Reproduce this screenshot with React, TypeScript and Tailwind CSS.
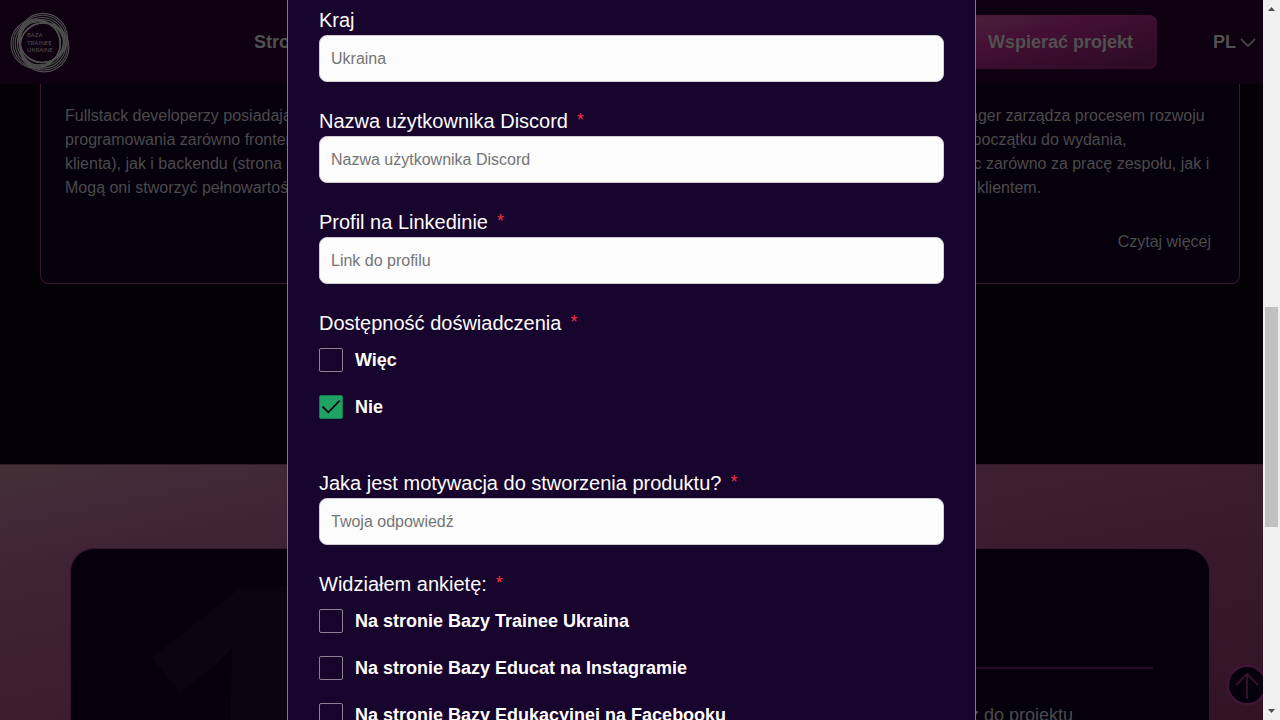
import React from "react";

const RING_ANGLES = [-68, 52, 172];
const RING_SIZES = [
  { r: 24.5, offset: 5.5 },
  { r: 23.6, offset: 4.4 },
  { r: 22.6, offset: 3.2 },
  { r: 21.6, offset: 2 },
];

function Logo() {
  return (
    <svg width="82" height="84" viewBox="0 0 82 84" aria-label="Baza Trainee Ukraine" className="shrink-0">
      <g fill="none" stroke="#4f4f4f" strokeWidth="1.1">
        {RING_ANGLES.flatMap((angle) =>
          RING_SIZES.map(({ r, offset }) => (
            <circle
              key={`${angle}-${r}`}
              cx={41 + offset * Math.cos((angle * Math.PI) / 180)}
              cy={43 + offset * Math.sin((angle * Math.PI) / 180)}
              r={r}
            />
          )),
        )}
      </g>
      <g fill="#4f4f4f" fontSize="6" fontFamily="Lato, sans-serif" fontWeight="500">
        <text x="27" y="37">BAZA</text>
        <text x="27" y="44.5">TRAINEE</text>
        <text x="27" y="52">UKRAINE</text>
      </g>
    </svg>
  );
}

function Header() {
  return (
    <header className="flex h-[84px] shrink-0 items-center bg-[#0e0010] text-lg font-bold text-[#505050]">
      <Logo />
      <nav className="ml-[172px] flex gap-10">
        <a href="#home" className="whitespace-nowrap">Strona główna</a>
      </nav>
      <button
        type="button"
        className="ml-auto h-[54px] rounded-lg bg-linear-to-br from-[#48243c] via-[#440f33] via-35% to-[#290a22] px-6 font-bold whitespace-nowrap shadow-[inset_0_0_4px_#421234]"
      >
        Wspierać projekt
      </button>
      <button type="button" className="mr-[7px] ml-14 flex items-center gap-1 font-bold">
        PL
        <svg width="16" height="16" viewBox="0 0 16 16" fill="none" stroke="#505050" strokeWidth="1.5" aria-hidden="true">
          <path d="M1 5l7 7 7-7" />
        </svg>
      </button>
    </header>
  );
}

function RoleCard({ lines }: { lines: string[] }) {
  return (
    <article className="flex h-[200px] min-w-0 flex-1 flex-col justify-between rounded-b-lg border border-t-0 border-[#3a1535] bg-[#06000d] px-6 pt-5 pb-[29px] leading-6 text-[#4b4b4b]">
      <p className="whitespace-nowrap">
        {lines.map((line) => (
          <span key={line} className="block">{line}</span>
        ))}
      </p>
      <a href="#more" className="mr-1 self-end">Czytaj więcej</a>
    </article>
  );
}

function Page() {
  return (
    <div className="flex h-full flex-col bg-[#030006]">
      <Header />
      <section className="mb-[180px] flex shrink-0 gap-7 pr-[23px] pl-10">
        <RoleCard
          lines={[
            "Fullstack developerzy posiadają umiejętności",
            "programowania zarówno frontendu (strona",
            "klienta), jak i backendu (strona serwera).",
            "Mogą oni stworzyć pełnowartościowy produkt.",
          ]}
        />
        <RoleCard lines={["Designer tworzy wygląd produktu."]} />
        <RoleCard
          lines={[
            "Project manager zarządza procesem rozwoju",
            "produktu od początku do wydania,",
            "odpowiadając zarówno za pracę zespołu, jak i",
            "negocjacje z klientem.",
          ]}
        />
      </section>
      <section className="flex min-h-0 flex-1 flex-col border-t border-[#331a26] bg-linear-to-br from-[#443037] via-[#402435] via-20% to-[#331226] pt-[83px] pr-[53px] pl-[70px]">
        <div className="flex flex-1 justify-between overflow-hidden rounded-t-3xl border border-b-0 border-[#381430] bg-[#06000d] pr-14 pl-[58px]">
          <span className="mt-[-100px] font-['Open_Sans',sans-serif] text-[388px] leading-[530px] font-bold text-[#0c0511]" aria-hidden="true">1</span>
          <div className="mt-[118px] w-[480px] border-t-2 border-[#280a24] pt-8 pr-20 text-right text-lg leading-7 text-[#4b4b4b]">
            Dołączasz do projektu
          </div>
        </div>
      </section>
    </div>
  );
}

function Label({ children, required, htmlFor }: { children: React.ReactNode; required?: boolean; htmlFor?: string }) {
  const content = (
    <>
      {children}
      {required && <span className="ml-1 align-top text-lg leading-7 text-[#f5303e]"> *</span>}
    </>
  );
  const style = "block h-[30px] text-xl leading-[30px] text-[#fcfcfc]";
  return htmlFor ? <label htmlFor={htmlFor} className={style}>{content}</label> : <legend className={style}>{content}</legend>;
}

function Field({ id, label, placeholder, required }: { id: string; label: string; placeholder: string; required?: boolean }) {
  return (
    <div>
      <Label htmlFor={id} required={required}>{label}</Label>
      <input
        id={id}
        type="text"
        placeholder={placeholder}
        className="block h-[47px] w-full rounded-lg border border-[#cfcbd3] bg-[#fcfcfc] px-[11px] text-base text-[#18052e] placeholder:text-[#757575]"
      />
    </div>
  );
}

function Choice({ label, checked }: { label: string; checked?: boolean }) {
  return (
    <label className="flex h-6 items-center gap-3 text-lg font-bold whitespace-nowrap text-white">
      <span className="relative block size-6 shrink-0">
        <input
          type="checkbox"
          defaultChecked={checked}
          className="peer block size-6 appearance-none rounded-xs border border-[#8a8290] checked:border-[#167a50] checked:bg-[#1ea362]"
        />
        <svg viewBox="0 0 24 24" className="pointer-events-none absolute inset-0 hidden peer-checked:block" fill="none" stroke="#0b0514" strokeWidth="1.8" aria-hidden="true">
          <path d="M3.5 11.5l5.8 5.8L20.7 5.6" />
        </svg>
      </span>
      {label}
    </label>
  );
}

function ChoiceGroup({ label, children }: { label: string; children: React.ReactNode }) {
  return (
    <fieldset>
      <Label required>{label}</Label>
      <div className="mt-2.5 flex flex-col gap-[23px]">{children}</div>
    </fieldset>
  );
}

function SurveyModal() {
  return (
    <div className="absolute inset-0 flex justify-center overflow-hidden" role="dialog" aria-modal="true">
      <form className="flex w-full max-w-[689px] flex-col gap-6 border-x border-[#c84bb0] bg-[#18052e] px-[31px] pt-[5px]">
        <Field id="country" label="Kraj" placeholder="Ukraina" />
        <Field id="discord" label="Nazwa użytkownika Discord" placeholder="Nazwa użytkownika Discord" required />
        <Field id="linkedin" label="Profil na Linkedinie" placeholder="Link do profilu" required />
        <div className="mb-[25px]">
          <ChoiceGroup label="Dostępność doświadczenia">
            <Choice label="Więc" />
            <Choice label="Nie" checked />
          </ChoiceGroup>
        </div>
        <Field id="motivation" label="Jaka jest motywacja do stworzenia produktu?" placeholder="Twoja odpowiedź" required />
        <ChoiceGroup label="Widziałem ankietę:">
          <Choice label="Na stronie Bazy Trainee Ukraina" />
          <Choice label="Na stronie Bazy Educat na Instagramie" />
          <Choice label="Na stronie Bazy Edukacyjnej na Facebooku" />
        </ChoiceGroup>
      </form>
    </div>
  );
}

function ScrollBar() {
  return (
    <div className="flex w-[17px] shrink-0 flex-col items-center bg-[#f0f0f0]" aria-hidden="true">
      <svg width="17" height="17" viewBox="0 0 17 17" fill="#505050"><path d="M5 11h7L8.5 7z" /></svg>
      <div className="flex w-full flex-1 flex-col items-center">
        <div className="h-[42.3%]" />
        <div className="h-[32%] w-[13px] bg-[#c1c1c1]" />
      </div>
      <svg width="17" height="17" viewBox="0 0 17 17" fill="#505050"><path d="M5 6h7l-3.5 4z" /></svg>
    </div>
  );
}

export default function App() {
  return (
    <div className="flex h-screen overflow-hidden font-['Liberation_Sans',Arial,sans-serif]">
      <main className="relative min-w-0 flex-1 overflow-hidden">
        <Page />
        <button
          type="button"
          aria-label="Do góry"
          className="absolute -right-1 bottom-[15px] flex size-10 items-center justify-center rounded-full border-2 border-[#421638] bg-[#06000d]"
        >
          <svg width="24" height="28" viewBox="0 0 24 28" fill="none" stroke="#351330" strokeWidth="1.8" aria-hidden="true">
            <path d="M12 28V3M1 14L12 3l11 11" />
          </svg>
        </button>
        <SurveyModal />
      </main>
      <ScrollBar />
    </div>
  );
}
